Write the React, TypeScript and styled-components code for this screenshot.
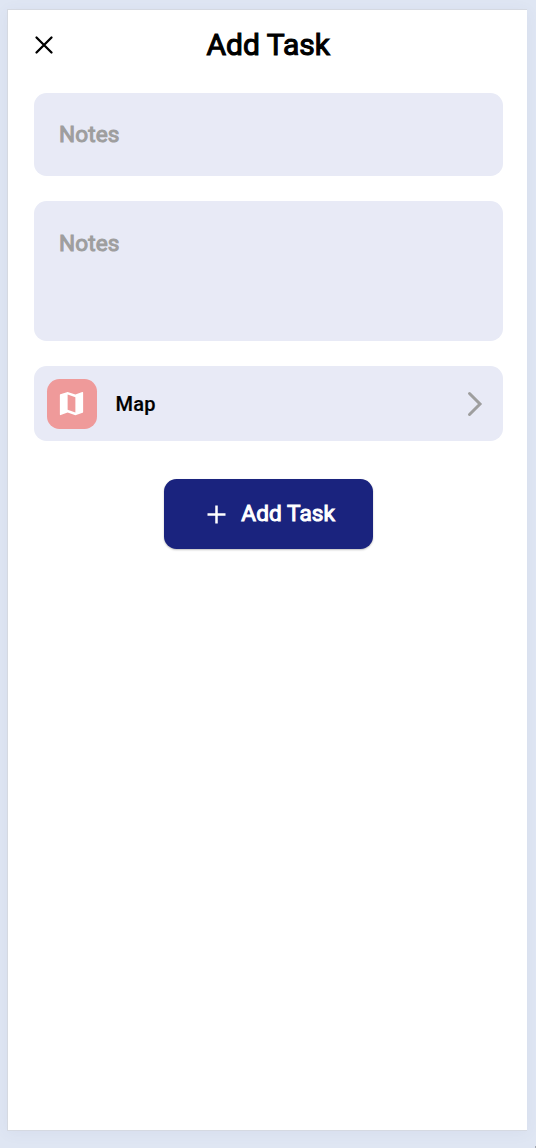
import React from 'react';
import styled, { createGlobalStyle } from 'styled-components';
import { MdMap } from 'react-icons/md';

const GlobalStyle = createGlobalStyle`
  * { box-sizing: border-box; }
  body { margin: 0; background: #dfe6f3; font-family: Roboto, sans-serif; }
`;

const Backdrop = styled.div`
  height: 1148px;
  padding: 9px 9px 17px 7px;
  background: linear-gradient(#a3a7ae, #a3a7ae) right bottom / 1px 2px no-repeat;
`;

const Sheet = styled.main`
  height: 1122px;
  padding: 0 24.5px 0 26px;
  display: flex;
  flex-direction: column;
  border: 1px solid #d5d9e1;
  border-right: 0;
  background: #fff;
  box-shadow: 0 2px 14px rgba(80, 90, 140, 0.06);
`;

const Header = styled.header`
  height: 83px;
  padding-bottom: 13px;
  display: grid;
  grid-template-columns: 20px 1fr 20px;
  align-items: center;
`;

const CloseButton = styled.button`
  display: flex;
  padding: 0;
  border: 0;
  background: none;
  color: #000;
`;

const Title = styled.h1`
  margin: 0;
  text-align: center;
  font-size: 30px;
  line-height: 36px;
  font-weight: 400;
  -webkit-text-stroke: 1.1px currentColor;
`;

const Field = styled.div<{ $height: number; $inset: number }>`
  height: ${(p) => p.$height}px;
  margin-bottom: 25px;
  padding: ${(p) => p.$inset}px 25px;
  border-radius: 12.5px;
  background: #e8eaf6;
  color: #9e9e9e;
  font-size: 22.6px;
  line-height: 28px;
  letter-spacing: 0.1px;
  -webkit-text-stroke: 1px currentColor;
`;

const MapRow = styled.div`
  height: 75px;
  padding: 0 19.5px 0 12.5px;
  display: flex;
  align-items: center;
  border-radius: 12.5px;
  background: #e8eaf6;
`;

const MapTile = styled.div`
  width: 50px;
  height: 50px;
  display: flex;
  align-items: center;
  justify-content: center;
  border-radius: 12.5px;
  background: #ef9a9a;
  color: #fff;
`;

const MapLabel = styled.span`
  flex: 1;
  margin-left: 19px;
  font-size: 20px;
  line-height: 24px;
  letter-spacing: 0.3px;
  font-weight: 500;
  -webkit-text-stroke: 0.2px currentColor;
`;

const AddButton = styled.button`
  align-self: center;
  width: 209px;
  height: 70px;
  margin-top: 38px;
  padding: 0 0 0 6px;
  display: flex;
  align-items: center;
  justify-content: center;
  gap: 15px;
  border: 0;
  border-radius: 12.5px;
  background: #1a237e;
  box-shadow: 0 1px 2px rgba(0, 0, 0, 0.26);
  color: #fff;
  font: 400 22.6px/28px Roboto, sans-serif;
  letter-spacing: 0.1px;
  -webkit-text-stroke: 1px currentColor;
`;

export default function App() {
  return (
    <>
      <GlobalStyle />
      <Backdrop>
        <Sheet>
          <Header>
            <CloseButton aria-label="Close">
              <svg width="20" height="20" viewBox="0 0 20 20" fill="none" stroke="currentColor" strokeWidth="2.3" strokeLinecap="round">
                <path d="M2.5 2.5l15 15M17.5 2.5l-15 15" />
              </svg>
            </CloseButton>
            <Title>Add Task</Title>
          </Header>
          <Field $height={83} $inset={28}>Notes</Field>
          <Field $height={140} $inset={29}>Notes</Field>
          <MapRow>
            <MapTile>
              <MdMap size={31} />
            </MapTile>
            <MapLabel>Map</MapLabel>
            <svg width="16" height="26" viewBox="0 0 16 26" fill="none" stroke="#9e9e9e" strokeWidth="3" strokeLinecap="round" strokeLinejoin="miter">
              <path d="M2.5 2.5L13 13L2.5 23.5" />
            </svg>
          </MapRow>
          <AddButton>
            <svg width="19" height="19" viewBox="0 0 19 19" fill="none" stroke="currentColor" strokeWidth="2.5">
              <path d="M9.5 0.5v18M0.5 9.5h18" />
            </svg>
            Add Task
          </AddButton>
        </Sheet>
      </Backdrop>
    </>
  );
}
